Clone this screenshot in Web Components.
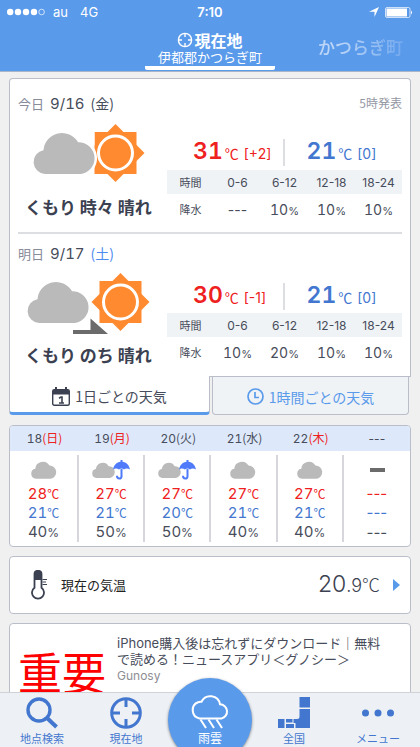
<!DOCTYPE html>
<html lang="ja">
<head>
<meta charset="utf-8">
<meta name="viewport" content="width=device-width, initial-scale=1">
<title>天気</title>
<style>
  html, body { height: 100%; margin: 0; }
  body {
    --ink: #474c5a; --dark: #3b4150; --muted: #9598a5; --line: #b9bec8;
    --sky: #5a9aeb; --blue: #4377cf; --red: #ee2020; --pale: #eff3f6;
    --jp: "Noto Sans CJK JP", sans-serif;
    color: var(--ink);
    font-family: Inter, "Noto Sans CJK JP", sans-serif;
    background: #f0f0f1;
  }
</style>
</head>
<body>
<weather-app></weather-app>
<script>
const define = (name, html, setup) => {
  const t = document.createElement('template');
  t.innerHTML = '<style>*{box-sizing:border-box}button{font:inherit;color:inherit;background:none;border:0;padding:0;margin:0;cursor:pointer}a{color:inherit;text-decoration:none}svg{display:block}.num{font-variant-numeric:tabular-nums}</style>' + html;
  customElements.define(name, class extends HTMLElement {
    constructor() {
      super();
      this.attachShadow({ mode: 'open' }).append(t.content.cloneNode(true));
    }
    connectedCallback() { if (setup) setup(this, this.shadowRoot); }
  });
};

/* 64 x 43 cloud */
const CLOUD = '<path d="M12 43A12 12 0 0 1 10.500 19.200 18.500 18.500 0 0 1 45 11.200 16 16 0 0 1 48 43Z" ';
const cloud = (x, y, s = 1, extra = '') => `<g transform="translate(${x} ${y}) scale(${s})">${CLOUD}fill="#bababa" ${extra}/></g>`;
const sun = (x, y) => `<g transform="translate(${x} ${y})"><g fill="#ff8a30"><rect x="-21" y="-21" width="42" height="42"/><path d="M0-29 29 0 0 29-29 0Z"/></g><circle r="17" fill="none" stroke="#fff" stroke-width="3"/></g>`;
const umbrella = (x, y) => `<g transform="translate(${x} ${y})"><path d="M0 9.500C1 4.500 4 2 7.500 1.700V0h2v1.700C13 2 16 4.500 17 9.500 15 8.300 12.500 8.300 11 9.500 9.500 8.300 7.500 8.300 6 9.500 4 8.300 2 8.300 0 9.500Z" fill="#4f7bfa"/><path d="M8.500 9V16.500Q8.500 18.600 6.200 18.600 4 18.600 4 15.800" fill="none" stroke="#4f7bfa" stroke-width="2"/></g>`;
const target = '<svg width="32" height="32" viewBox="0 0 32 32" fill="none" stroke="currentColor" stroke-width="3"><circle cx="16" cy="16" r="14.300"/><path d="M16 2v8M16 22v8M2 16h8M22 16h8"/></svg>';

const SKIES = {
  sometimes: `<svg width="150" height="64" viewBox="0 0 150 64" role="img" aria-label="くもり時々晴れ">${sun(97.5, 32)}<path d="M68 0H76.500V40L68 30Z" fill="#fff"/>${cloud(15, 10, 1, 'stroke="#fff" stroke-width="5" paint-order="stroke"')}</svg>`,
  later: `<svg width="150" height="64" viewBox="0 0 150 64" role="img" aria-label="くもりのち晴れ">${cloud(9, 9)}${sun(102.5, 31)}<path d="M55 59H72.500V47.500L90 63H55Z" fill="#6b6b6b"/></svg>`,
  cloudy: `<svg width="32" height="22" viewBox="0 0 32 22" role="img" aria-label="くもり">${cloud(3, 2, .41)}</svg>`,
  rain: `<svg width="40" height="22" viewBox="0 0 40 22" role="img" aria-label="くもり雨">${cloud(1, 3, .37)}${umbrella(22, 1)}</svg>`,
  none: `<svg width="32" height="22" viewBox="0 0 32 22" role="img" aria-label="なし"><rect x="9" y="9" width="15" height="4" fill="#6b6b6b"/></svg>`
};

define('status-bar', `
<style>
  :host { display: grid; grid-template-columns: 1fr auto 1fr; align-items: center; height: 24px; padding: 0 7px; font-size: 13px; line-height: 16px; }
  .l, .r { display: flex; align-items: center; }
  .l span { margin-left: 12px; } .l svg + span { margin-left: 8px; }
  .r { justify-content: flex-end; gap: 6px; }
  b { font-weight: 600; }
</style>
<div class="l"><svg width="38" height="8" viewBox="0 0 38 8" fill="#fff"><circle cx="3.200" cy="4" r="3.200"/><circle cx="11" cy="4" r="3.200"/><circle cx="19" cy="4" r="3.200"/><circle cx="27" cy="4" r="3.200"/><circle cx="34.600" cy="4" r="2.800" fill="none" stroke="#fff" stroke-width=".7"/></svg><span>au</span><span>4G</span></div>
<b>7:10</b>
<div class="r"><svg width="10" height="10" viewBox="0 0 10 10"><path d="M10 0 5.500 10V4.800H0Z" fill="#fff"/></svg><svg width="28" height="11" viewBox="0 0 28 11"><rect x=".5" y=".5" width="24.500" height="10" rx="1.500" fill="none" stroke="#fff" stroke-opacity=".7"/><rect x="1.500" y="1.500" width="20.500" height="8" fill="#fff"/><path d="M26 3.500q2 2 0 4Z" fill="#fff"/></svg></div>`);

define('place-header', `
<style>
  :host { display: block; color: #fff; background: var(--sky); border-bottom: 1px solid #a9b6c9; }
  nav { display: grid; grid-template-columns: 1fr auto 1fr; height: 47px; }
  .here { grid-column: 2; width: 130px; padding-top: 6px; display: flex; flex-direction: column; align-items: center; border-bottom: 4px solid #fff; border-radius: 2px; margin-bottom: 1px; }
  .here b { display: flex; align-items: center; gap: 1px; font: 700 16px/20px var(--jp); }
  .here b svg { width: 16px; height: 16px; }
  .here span { font: 13px/14px var(--jp); }
  .next { justify-self: end; padding: 13px 17px 0 0; font: 500 17px/20px var(--jp); opacity: .6; -webkit-mask-image: linear-gradient(90deg, #000 20%, #0003 90%); mask-image: linear-gradient(90deg, #000 20%, #0003 90%); }
</style>
<status-bar></status-bar>
<nav>
  <a class="here" href="#here"><b><svg viewBox="0 0 16 16" fill="none" stroke="#fff" stroke-width="1.400"><circle cx="8" cy="8" r="6.600"/><path d="M8 1v4M8 11v4M1 8h4M11 8h4"/></svg>現在地</b><span>伊都郡かつらぎ町</span></a>
  <a class="next" href="#next">かつらぎ町</a>
</nav>`);

define('day-forecast', `
<style>
  :host { display: block; margin: 0 8px; padding-top: 14px; height: 155px; border-bottom: 2px solid #dcdee2; }
  :host([compact]) { padding-top: 9px; height: 142px; border: 0; }
  header { display: flex; justify-content: space-between; line-height: 20px; height: 20px; font-size: 15px; }
  header .rel { font: 13px/20px var(--jp); color: #878b9a; margin-right: 6px; }
  header .dow { font: 14px/20px var(--jp); margin-left: 6px; }
  :host([sat]) .dow { color: #4d8bf0; }
  header .pub { font: 12px/20px var(--jp); color: var(--muted); }
  .body { display: flex; justify-content: space-between; }
  .sky { padding-top: 8px; width: 149px; }
  h3 { margin: 10px 0 0; padding-left: 7px; font: 700 17px/24px var(--jp); color: var(--dark); white-space: nowrap; }
  :host([compact]) h3 { margin-top: 8px; }
  .data { flex: 0 0 235px; padding-top: 26px; }
  :host([compact]) .data { padding-top: 20px; }
  .temps { display: grid; grid-template-columns: 1fr 1fr; height: 23px; margin-bottom: 8px; }
  :host([compact]) .temps { margin-bottom: 7px; }
  .temps p { margin: 0; display: flex; align-items: baseline; line-height: 24px; font-size: 14px; }
  .temps strong { font-size: 23px; font-weight: 600; }
  .temps i { font: 14px/24px var(--jp); margin: 0 5px 0 2px; }
  .hi { color: var(--red); padding-left: 26px; border-right: 2px solid #dcdee2; }
  .lo { color: var(--blue); padding-left: 22px; }
  table { width: 100%; table-layout: fixed; border-collapse: collapse; text-align: center; }
  th, td { padding: 0; font-weight: 400; }
  thead th { height: 24px; background: var(--pale); font-size: 12px; }
  tbody td { height: 30px; font-size: 14px; }
  th:first-child { font: 11px/16px var(--jp); }
  small { font-size: 11px; }
</style>
<header><div><span class="rel"></span><span class="date num"></span><span class="dow"></span></div><span class="pub"></span></header>
<div class="body">
  <div class="sky"><div class="icon"></div><h3><slot></slot></h3></div>
  <div class="data">
    <div class="temps"><p class="hi"><strong class="num"></strong><i>℃</i><span></span></p><p class="lo"><strong class="num"></strong><i>℃</i><span></span></p></div>
    <table><thead><tr><th scope="col">時間</th><th scope="col">0-6</th><th scope="col">6-12</th><th scope="col">12-18</th><th scope="col">18-24</th></tr></thead><tbody><tr class="rain"><th scope="row">降水</th></tr></tbody></table>
  </div>
</div>`, (el, r) => {
  const g = k => el.getAttribute(k) || '';
  r.querySelector('.rel').textContent = g('rel');
  r.querySelector('.date').textContent = g('date');
  r.querySelector('.dow').textContent = g('dow');
  r.querySelector('.pub').textContent = g('published');
  r.querySelector('.icon').innerHTML = SKIES[g('sky')];
  ['hi', 'lo'].forEach(k => {
    const [v, d] = g(k).split(' ');
    r.querySelector(`.${k} strong`).textContent = v;
    r.querySelector(`.${k} span`).textContent = d;
  });
  r.querySelector('.rain').innerHTML += g('rain').split(' ').map(v => `<td${v === '---' ? '' : ' class="num"'}>${v.replace('%', '<small>%</small>')}</td>`).join('');
});

define('forecast-tabs', `
<style>
  :host { display: block; }
  .card { background: #fff; border: 1px solid var(--line); border-bottom: 0; border-radius: 4px 4px 0 0; }
  .tabs { display: grid; grid-template-columns: 1fr 1fr; height: 39px; }
  button { display: flex; align-items: center; justify-content: center; gap: 5px; width: 100%; font: 14px/20px var(--jp); }
  .on { background: #fff; border: 1px solid var(--line); border-top: 0; border-bottom: 3px solid var(--sky); border-radius: 0 0 4px 4px; height: 39px; padding-top: 4px; }
  .rest { border-top: 1px solid var(--line); padding: 0 2px; }
  .off { height: 38px; padding-top: 2px; color: var(--sky); background: var(--pale); border: 1px solid var(--line); border-top: 0; border-radius: 0 0 4px 4px; }
</style>
<div class="card"><slot></slot></div>
<div class="tabs" role="tablist">
  <button class="on" role="tab" aria-selected="true"><svg width="18" height="19" viewBox="0 0 18 19"><rect x=".7" y="2.700" width="16.600" height="15.600" rx="1.500" fill="none" stroke="#3b4150" stroke-width="1.400"/><path d="M1 7.500V3.500L3 2V0h2v2h8V0h2v2l2 1.500v4Z" fill="#3b4150"/><path d="M7 11.200 9 10h1v6M7 16h5" fill="none" stroke="#3b4150" stroke-width="1.600"/></svg>1日ごとの天気</button>
  <div class="rest"><button class="off" role="tab" aria-selected="false"><svg width="17" height="17" viewBox="0 0 17 17" fill="none" stroke="#5a9aeb" stroke-width="1.700"><circle cx="8.500" cy="8.500" r="7.500"/><path d="M8 4V9.500H12"/></svg>1時間ごとの天気</button></div>
</div>`);

define('week-table', `
<style>
  :host { display: block; background: #fff; border: 1px solid var(--line); border-radius: 4px; overflow: hidden; padding-bottom: 4px; }
  table { width: 100%; table-layout: fixed; border-collapse: separate; border-spacing: 0; text-align: center; }
  th, td { padding: 0; font-weight: 400; height: 19px; line-height: 19px; font-size: 15px; }
  th:first-child { width: 69px; }
  th { height: 25px; background: #dde9fa; font-size: 12px; }
  th i { font: 12px/16px var(--jp); }
  tbody::before { content: ""; display: block; height: 4px; }
  td:not(:last-child) { border-right: 2px solid #d6d6dc; }
  .sky td { height: 29px; } .sky svg { margin: 0 auto; }
  .hi td, .hol { color: var(--red); } .lo td { color: var(--blue); }
  small { font-size: 12px; } td i { font: 12px/16px var(--jp); }
</style>
<table><thead><tr></tr></thead><tbody><tr class="sky"></tr><tr class="hi"></tr><tr class="lo"></tr><tr class="rain"></tr></tbody></table>`, (el, r) => {
  const days = [['18', '日', 'cloudy', 28, 21, 40, 1], ['19', '月', 'rain', 27, 21, 50, 1], ['20', '火', 'rain', 27, 20, 50], ['21', '水', 'cloudy', 27, 21, 40], ['22', '木', 'cloudy', 27, 21, 40, 1], null];
  const fill = (q, f) => r.querySelector(q).innerHTML = days.map(f).join('');
  fill('thead tr', d => d ? `<th scope="col" class="num">${d[0]}<i class="${d[6] ? 'hol' : ''}">(${d[1]})</i></th>` : '<th scope="col">---</th>');
  fill('.sky', d => `<td>${SKIES[d ? d[2] : 'none']}</td>`);
  const values = (q, k, unit) => fill(q, d => d ? `<td class="num">${d[k]}${unit}</td>` : '<td>---</td>');
  values('.hi', 3, '<i>℃</i>');
  values('.lo', 4, '<i>℃</i>');
  values('.rain', 5, '<small>%</small>');
});

define('current-temp', `
<style>
  :host { display: block; background: #fff; border: 1px solid var(--line); border-radius: 4px; }
  a { display: flex; align-items: center; height: 56px; padding: 0 10px 0 21px; }
  .label { margin-left: 13px; font: 13px/20px var(--jp); color: #222; flex: 1; }
  .v { font-size: 23px; font-weight: 300; line-height: 28px; color: var(--dark); margin-right: 13px; display: flex; align-items: baseline; }
  .v small { font-size: 18px; } .v i { font: 300 18px/28px var(--jp); }
</style>
<a href="#temp"><svg width="17" height="31" viewBox="0 0 17 31"><path d="M3.500 4Q3.500.8 7 .8 10.500.8 10.500 4V17.800A6 6 0 1 1 3.500 17.800Z" fill="#fff" stroke="#3b4150" stroke-width="1.800"/><path d="M3.500 10V4Q3.500.8 7 .8 10.500.8 10.500 4V10Z" fill="#3b4150"/><path d="M11.500 9.500H16M11.500 12H15M11.500 14.500H16" stroke="#3b4150" stroke-width="1"/></svg>
<span class="label">現在の気温</span><span class="v">20<small>.9</small><i>℃</i></span><svg width="7" height="12" viewBox="0 0 7 12"><path d="M0 0 7 6 0 12Z" fill="#5a9aeb"/></svg></a>`);

define('news-card', `
<style>
  :host { display: block; background: #fff; border: 1px solid var(--line); border-radius: 4px; height: 100px; }
  a { display: grid; grid-template-columns: 88px 1fr; column-gap: 11px; padding: 11px 20px 0 8px; }
  .pic { padding-top: 12px; font: 44px/48px var(--jp); color: #f00; white-space: nowrap; }
  h4 { margin: 0; font-weight: 400; font-size: 13px; line-height: 16px; }
  p { margin: 1px 0 0; font-size: 12px; line-height: 16px; color: #8e8e93; }
</style>
<a href="#news"><div class="pic">重要</div><div><h4><slot></slot></h4><p>Gunosy</p></div></a>`);

define('nav-bar', `
<style>
  :host { display: grid; grid-template-columns: repeat(5, 1fr); height: 55px; background: #edf1f5; border-top: 1px solid #cfd2d6; color: var(--blue); position: relative; font: 11px/16px var(--jp); }
  a { display: flex; flex-direction: column; align-items: center; padding-top: 4px; gap: 1px; }
  .cloud { justify-self: center; width: 84px; height: 84px; margin-top: -15px; padding-top: 16px; gap: 1px; border-radius: 50%; background: var(--sky); color: #fff; box-shadow: 0 1px 3px #0007; font-size: 12px; }
</style>
<a href="#search"><svg width="32" height="32" viewBox="0 0 32 32" fill="none" stroke="currentColor"><circle cx="13" cy="13" r="11" stroke-width="3.400"/><path d="M20.500 20.500 30.500 30" stroke-width="4"/></svg>地点検索</a>
<a href="#here">${target}現在地</a>
<a class="cloud" href="#rain"><svg width="40" height="35" viewBox="0 0 40 35" fill="none" stroke="#fff" stroke-width="2"><path d="M9.500 24.500A8.500 8.500 0 0 1 8 8.300Q9.300 7.600 11.500 7.800A9.800 9.800 0 0 1 30 10.300 7.200 7.200 0 0 1 31.500 24.500Z"/><path d="M10.500 25.500 16 34M18.500 25.500 24 34M26.500 25.500 32 34"/></svg>雨雲</a>
<a href="#country"><svg width="32" height="32" viewBox="0 0 32 32" fill="currentColor"><path d="M21.500 0H32V10.500H21.500ZM21.500 12H32V31H17.500V26H15.500V22H19Q21.500 22 21.500 19.500ZM8 22H14.500V25.500H8ZM0 22H6.500V31H0ZM8 27H16V31H8Z"/></svg>全国</a>
<a href="#menu"><svg width="32" height="32" viewBox="0 0 32 32" fill="currentColor"><circle cx="3.500" cy="16" r="3.500"/><circle cx="16" cy="16" r="3.500"/><circle cx="28.500" cy="16" r="3.500"/></svg>メニュー</a>`);

define('weather-app', `
<style>
  :host { display: flex; flex-direction: column; height: 100vh; overflow: hidden; }
  main { flex: 1; min-height: 0; overflow: hidden; display: flex; flex-direction: column; gap: 9px; padding: 6px 9px 0; }
  main > * { flex: none; }
  week-table { margin-top: 1px; }
</style>
<place-header></place-header>
<main>
  <forecast-tabs>
    <day-forecast rel="今日" date="9/16" dow="(金)" published="5時発表" sky="sometimes" hi="31 [+2]" lo="21 [0]" rain="--- 10% 10% 10%">くもり 時々 晴れ</day-forecast>
    <day-forecast compact sat rel="明日" date="9/17" dow="(土)" sky="later" hi="30 [-1]" lo="21 [0]" rain="10% 20% 10% 10%">くもり のち 晴れ</day-forecast>
  </forecast-tabs>
  <week-table></week-table>
  <current-temp></current-temp>
  <news-card>iPhone購入後は忘れずにダウンロード｜無料で読める！ニュースアプリ＜グノシー＞</news-card>
</main>
<nav-bar></nav-bar>`);
</script>
</body>
</html>
